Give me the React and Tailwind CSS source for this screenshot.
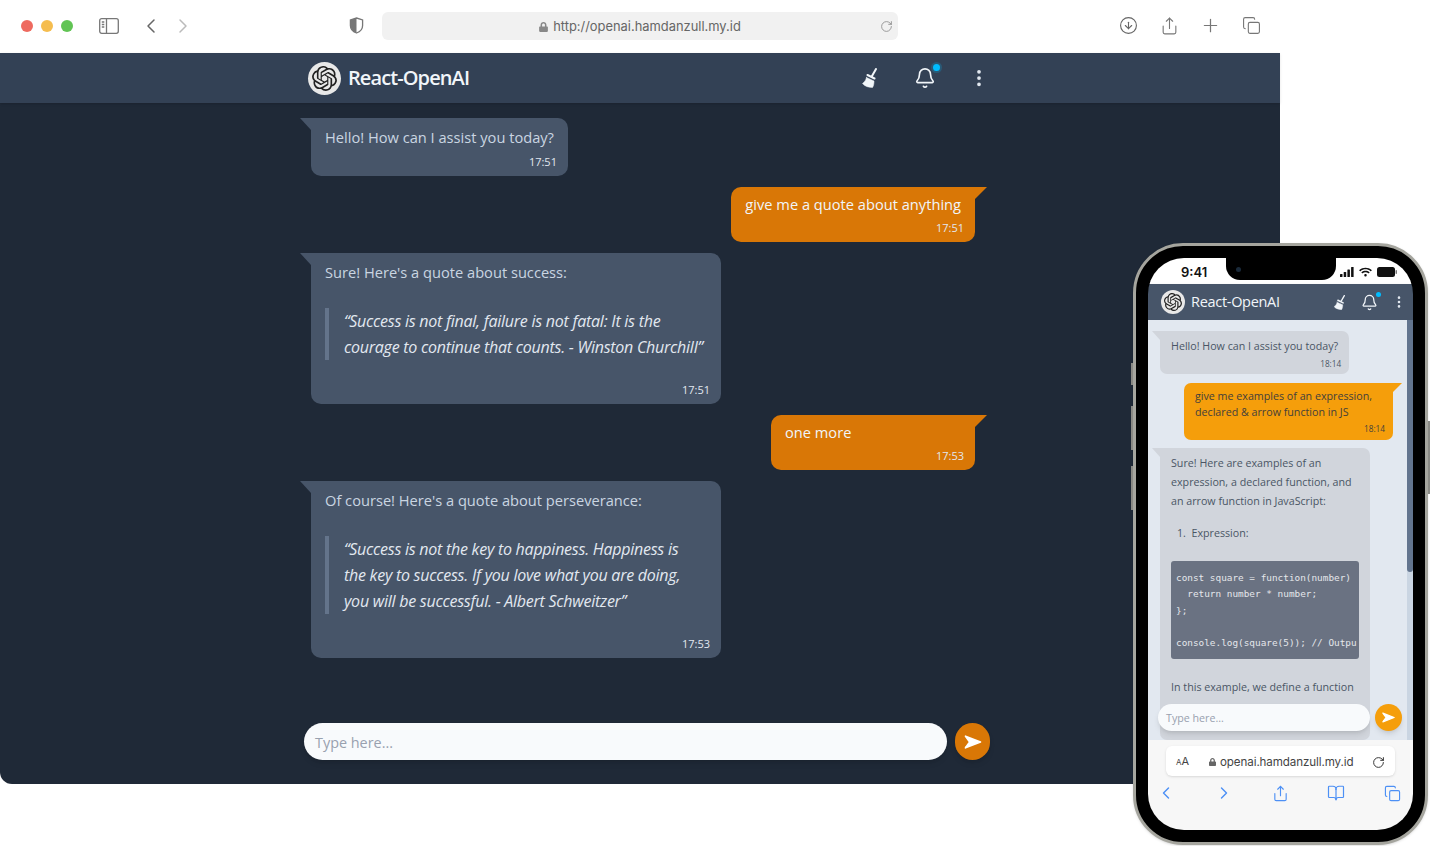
import React from 'react';
import { SiOpenai } from 'react-icons/si';
import { FaLock, FaWifi } from 'react-icons/fa';
import { BsThreeDotsVertical } from 'react-icons/bs';
import {
  Bell,
  BookOpen,
  ChevronLeft,
  ChevronRight,
  CircleArrowDown,
  Copy,
  Plus,
  RotateCw,
  Share,
} from 'lucide-react';

const font = "font-['Open_Sans',sans-serif]";

const SendArrow = ({ className }) => (
  <svg viewBox="0 0 24 24" className={className} fill="white" stroke="white" strokeWidth="2" strokeLinejoin="round">
    <path d="M3 5l18 7-18 7 5-7z" />
  </svg>
);

const Broom = ({ className }) => (
  <svg viewBox="0 0 16 20" className={className} fill="#f1f5f9" stroke="#f1f5f9" strokeLinecap="round">
    <path d="M15 1l-4 7M6.500 7l7 3.500" strokeWidth="2" fill="none" />
    <path d="M5.500 9.500L13 13c0 3-.5 5-1.500 6.500-3.500 0-7.500-1-10-4 2-1.500 3.500-3.500 4-6z" strokeWidth="0.500" />
  </svg>
);

const ShieldHalf = () => (
  <svg viewBox="0 0 16 18" className="w-[15px] h-[17px]" fill="none">
    <path d="M8 1l6.5 2v6c0 4-3 6.8-6.5 8-3.500-1.200-6.500-4-6.500-8V3z" stroke="#777" strokeWidth="1.400" />
    <path d="M8 1v16c-3.500-1.200-6.500-4-6.500-8V3z" fill="#777" />
  </svg>
);

const SidebarIcon = () => (
  <svg viewBox="0 0 20 16" className="w-[20px] h-[16px]" fill="none" stroke="#777" strokeWidth="1.300">
    <rect x="0.700" y="0.700" width="18.600" height="14.600" rx="2" />
    <path d="M7.500 1v14M2.800 4h2.500M2.800 6.500h2.500M2.800 9h2.500" />
  </svg>
);

const SafariBar = () => (
  <div className="h-[53px] pb-[2px] flex items-center bg-white shrink-0">
    <div className="flex gap-2 ml-[21px]">
      <span className="w-3 h-3 rounded-full bg-[#ee6a5f]" />
      <span className="w-3 h-3 rounded-full bg-[#f5bd4f]" />
      <span className="w-3 h-3 rounded-full bg-[#61c454]" />
    </div>
    <div className="ml-[26px]">
      <SidebarIcon />
    </div>
    <ChevronLeft className="ml-[20px] w-[24px] h-[24px] text-[#666]" strokeWidth={1.500} />
    <ChevronRight className="ml-[8px] w-[24px] h-[24px] text-[#bbb]" strokeWidth={1.500} />
    <div className="ml-[154px]">
      <ShieldHalf />
    </div>
    <div className="ml-[18px] w-[516px] h-[28px] pt-[2px] rounded-md bg-[#f1f1f1] flex items-center justify-center relative font-['Inter',sans-serif] text-[12.900px] text-[#666]">
      <FaLock className="w-[9px] h-[10px] text-[#888] mr-[5px]" />
      http://openai.hamdanzull.my.id
      <RotateCw className="absolute right-[5px] top-[8px] w-[13px] h-[13px] text-[#888]" strokeWidth={1.500} />
    </div>
    <CircleArrowDown className="ml-[221px] w-[19px] h-[19px] text-[#666]" strokeWidth={1.400} />
    <Share className="ml-[22px] w-[19px] h-[20px] text-[#777]" strokeWidth={1.400} />
    <Plus className="ml-[21px] w-[21px] h-[21px] text-[#777]" strokeWidth={1.400} />
    <Copy className="ml-[21px] w-[19px] h-[19px] text-[#777]" strokeWidth={1.400} />
  </div>
);

const Tail = ({ side, size, color }) =>
  side === 'left' ? (
    <span className={`absolute top-0 right-full [clip-path:polygon(0_0,100%_0,100%_100%)] ${size} ${color}`} />
  ) : (
    <span className={`absolute top-0 left-full [clip-path:polygon(0_0,100%_0,0_100%)] ${size} ${color}`} />
  );

const Time = ({ children, className = '' }) => (
  <div className={`text-right text-[11px] leading-[18px] -mr-[3px] text-slate-200 ${className}`}>{children}</div>
);

const Received = ({ children, time, className = '' }) => (
  <div className={`relative self-start ml-[11px] bg-[#475569] text-slate-300 rounded-b-[10px] rounded-tr-[10px] px-[14px] pt-[6px] pb-[5px] ${className}`}>
    <Tail side="left" size="w-[11px] h-[12px]" color="bg-[#475569]" />
    {children}
    <Time className="mt-[3px]">{time}</Time>
  </div>
);

const Sent = ({ children, time, className = '' }) => (
  <div className={`relative self-end mr-[15px] bg-[#d97706] text-slate-100 rounded-b-[10px] rounded-tl-[10px] px-[14px] pt-[4px] pb-[5px] ${className}`}>
    <Tail side="right" size="w-[12px] h-[12px]" color="bg-[#d97706]" />
    {children}
    <Time className="mt-[2px]">{time}</Time>
  </div>
);

const Quote = ({ children }) => (
  <blockquote className="mt-[23px] mb-[21px] border-l-4 border-[#64748b] pl-[15px] italic font-medium text-[16px] tracking-[-0.25px] text-slate-200 whitespace-pre-line">
    {children}
  </blockquote>
);

const DesktopApp = () => (
  <div className={`flex flex-col flex-1 bg-[#1f2937] rounded-bl-xl text-[14.650px] leading-[26px] ${font}`}>
    <div className="h-[50px] bg-[#334155] shadow-sm flex items-center pl-[308px] shrink-0">
      <div className="w-[33px] h-[33px] rounded-full bg-[#e8e8e8] flex items-center justify-center">
        <SiOpenai className="w-[25px] h-[25px] text-[#222]" />
      </div>
      <span className="ml-[7px] text-[20px] font-semibold tracking-[-0.9px] text-slate-100">React-OpenAI</span>
      <Broom className="ml-[392px] w-[16px] h-[20px]" />
      <div className="relative ml-[37px]">
        <Bell className="w-[22px] h-[22px] text-slate-100" strokeWidth={1.800} />
        <span className="absolute -top-[3px] -right-[4px] w-[7px] h-[7px] rounded-full bg-sky-400 ring-2 ring-sky-400/20" />
      </div>
      <BsThreeDotsVertical className="ml-[33px] w-[20px] h-[20px] text-slate-200" />
    </div>
    <div className="ml-[300px] w-[690px] flex-1 flex flex-col justify-between pb-[24px]">
      <div className="flex flex-col gap-[11px] pt-[15px]">
        <Received time="17:51">Hello! How can I assist you today?</Received>
        <Sent time="17:51">give me a quote about anything</Sent>
        <Received time="17:51" className="w-[410px]">
          <p>Sure! Here's a quote about success:</p>
          <Quote>{'“Success is not final, failure is not fatal: It is the\ncourage to continue that counts. - Winston Churchill”'}</Quote>
        </Received>
        <Sent time="17:53" className="w-[204px]">one more</Sent>
        <Received time="17:53" className="w-[410px]">
          <p>Of course! Here's a quote about perseverance:</p>
          <Quote>{'“Success is not the key to happiness. Happiness is\nthe key to success. If you love what you are doing,\nyou will be successful. - Albert Schweitzer”'}</Quote>
        </Received>
      </div>
      <div className="flex items-center pl-[4px]">
        <div className="w-[643px] h-[37px] pt-[2px] rounded-full bg-slate-50 shadow-md flex items-center px-[11px] text-[14.400px] text-gray-400">
          Type here...
        </div>
        <button className="ml-[8px] w-[35px] h-[37px] rounded-full bg-[#d97706] flex items-center justify-center shadow-md">
          <SendArrow className="w-[20px] h-[20px]" />
        </button>
      </div>
    </div>
  </div>
);

const PhoneReceived = ({ children, className = '' }) => (
  <div className={`relative self-start ml-[12px] bg-gray-300 text-gray-600 rounded-b-[7px] rounded-tr-[7px] px-[11px] ${className}`}>
    <Tail side="left" size="w-[8px] h-[9px]" color="bg-gray-300" />
    {children}
  </div>
);

const StatusIcons = () => (
  <div className="flex items-center gap-[5px]">
    <svg viewBox="0 0 14 10" className="w-[14px] h-[10px]" fill="#111">
      <rect x="0" y="7" width="2.500" height="3" rx="0.500" />
      <rect x="3.700" y="5" width="2.500" height="5" rx="0.500" />
      <rect x="7.400" y="2.500" width="2.500" height="7.500" rx="0.500" />
      <rect x="11.100" y="0" width="2.500" height="10" rx="0.500" />
    </svg>
    <FaWifi className="w-[13px] h-[10px] text-[#111]" />
    <svg viewBox="0 0 20 10" className="w-[20px] h-[10px]" fill="#111">
      <rect x="0" y="0" width="18" height="10" rx="2.500" />
      <rect x="18.500" y="3" width="1.500" height="4" rx="0.700" fill="#777" />
    </svg>
  </div>
);

const PhoneApp = () => (
  <div className={`flex flex-col w-full h-full text-[10.700px] leading-[19px] ${font}`}>
    <div className="h-[26px] bg-white shrink-0 flex items-center justify-between pl-[33px] pr-[16px] pt-[2px]">
      <span className="font-['Inter',sans-serif] text-[13px] font-semibold text-[#111]">9:41</span>
      <StatusIcons />
    </div>
    <div className="h-[36px] bg-[#475569] shrink-0 flex items-center pl-[13px] shadow-sm">
      <div className="w-[24px] h-[24px] rounded-full bg-[#e8e8e8] flex items-center justify-center">
        <SiOpenai className="w-[18px] h-[18px] text-[#222]" />
      </div>
      <span className="ml-[6px] -mt-[2px] text-[14.500px] font-medium tracking-[-0.3px] text-slate-100">React-OpenAI</span>
      <Broom className="ml-[53px] w-[12px] h-[15px]" />
      <div className="relative ml-[16px]">
        <Bell className="w-[17px] h-[17px] text-slate-100" strokeWidth={1.800} />
        <span className="absolute -top-[2px] -right-[3px] w-[5px] h-[5px] rounded-full bg-sky-400" />
      </div>
      <BsThreeDotsVertical className="ml-[14px] w-[14px] h-[14px] text-slate-200" />
    </div>
    <div className="relative flex-1 min-h-0 bg-slate-200 overflow-hidden flex">
      <div className="flex-1 min-w-0 flex flex-col gap-[9px] pt-[11px]">
        <PhoneReceived className="pt-[6px] pb-[3px]">
          <p>Hello! How can I assist you today?</p>
          <div className="text-right text-[8.200px] leading-[14px] pt-[1px] -mr-[3px] text-gray-600">18:14</div>
        </PhoneReceived>
        <div className="relative self-end mr-[14px] w-[209px] bg-[#f59e0b] text-stone-700 rounded-b-[7px] rounded-tl-[7px] px-[11px] pt-[5px] pb-[4px] leading-[16px]">
          <Tail side="right" size="w-[9px] h-[9px]" color="bg-[#f59e0b]" />
          <p>give me examples of an expression,</p>
          <p>declared &amp; arrow function in JS</p>
          <div className="text-right text-[8.200px] leading-[14px] pt-[2px] -mr-[3px] text-stone-700">18:14</div>
        </div>
        <PhoneReceived className="w-[210px] -mt-px pt-[6px] h-[300px]">
          <p>Sure! Here are examples of an<br />expression, a declared function, and<br />an arrow function in JavaScript:</p>
          <p className="mt-[13px] pl-[6px]">1.&nbsp;&nbsp;Expression:</p>
          <pre className="mt-[18px] h-[98px] overflow-hidden rounded-[3px] bg-gray-500 text-gray-200 px-[5px] pt-[9px] font-['DejaVu_Sans_Mono',monospace] text-[9.400px] leading-[16.300px]">
            {'const square = function(number)\n  return number * number;\n};\n\nconsole.log(square(5)); // Outpu'}
          </pre>
          <p className="mt-[19px] whitespace-nowrap">In this example, we define a function</p>
        </PhoneReceived>
      </div>
      <div className="w-[6px] shrink-0 bg-slate-300">
        <div className="h-[252px] bg-slate-500 rounded-b-sm" />
      </div>
      <div className="absolute left-[10px] top-[384px] flex items-center">
        <div className="w-[212px] h-[27px] pt-[2px] rounded-full bg-slate-50 shadow-md flex items-center pl-[8px] text-gray-400">
          Type here...
        </div>
        <button className="ml-[5px] w-[27px] h-[27px] rounded-full bg-[#f59e0b] flex items-center justify-center shadow-md">
          <SendArrow className="w-[15px] h-[15px]" />
        </button>
      </div>
    </div>
    <div className="h-[90px] bg-[#f7f7f7] shrink-0 pt-[6px]">
      <div className="mx-[18px] h-[30px] pt-[2px] rounded-[6px] bg-white shadow-sm flex items-center font-['Inter',sans-serif] text-[11.600px] text-[#444]">
        <span className="ml-[10px] w-[33px] text-[#444]"><span className="text-[8px]">A</span><span className="text-[11px]">A</span></span>
        <FaLock className="w-[7px] h-[8px] text-[#666] mr-[4px]" />
        <span className="tracking-[-0.1px]">openai.hamdanzull.my.id</span>
        <RotateCw className="ml-[19px] w-[13px] h-[13px] text-[#333]" strokeWidth={1.800} />
      </div>
      <div className="flex items-center justify-between mt-[7px] pl-[8px] pr-[12px] text-[#4d90f5]">
        <ChevronLeft className="w-[20px] h-[20px]" strokeWidth={1.700} />
        <ChevronRight className="w-[20px] h-[20px]" strokeWidth={1.700} />
        <Share className="w-[17px] h-[19px]" strokeWidth={1.600} />
        <BookOpen className="w-[20px] h-[18px]" strokeWidth={1.600} />
        <Copy className="w-[17px] h-[17px]" strokeWidth={1.600} />
      </div>
    </div>
  </div>
);

const Phone = () => (
  <div className="absolute left-[1133px] top-[243px] w-[295px] h-[602px] rounded-[50px] border-[3px] border-[#a5a59e] bg-black p-[12px] shadow-sm">
    <span className="absolute -left-[5px] top-[117px] w-[2px] h-[22px] bg-[#8a8a85]" />
    <span className="absolute -left-[5px] top-[160px] w-[2px] h-[44px] bg-[#8a8a85]" />
    <span className="absolute -left-[5px] top-[220px] w-[2px] h-[44px] bg-[#8a8a85]" />
    <span className="absolute -right-[5px] top-[175px] w-[2px] h-[73px] bg-[#8a8a85]" />
    <div className="relative w-full h-full rounded-[36px] overflow-hidden">
      <PhoneApp />
      <div className="absolute top-0 left-[78px] w-[110px] h-[22px] bg-black rounded-b-[14px] flex items-center pl-[10px]">
        <span className="w-[5px] h-[5px] rounded-full bg-[#1a2a3a]" />
      </div>
    </div>
  </div>
);

export default function App() {
  return (
    <div className="relative w-[1430px] h-[846px] overflow-hidden bg-white">
      <div className="w-[1280px] h-[784px] flex flex-col">
        <SafariBar />
        <DesktopApp />
      </div>
      <Phone />
    </div>
  );
}
